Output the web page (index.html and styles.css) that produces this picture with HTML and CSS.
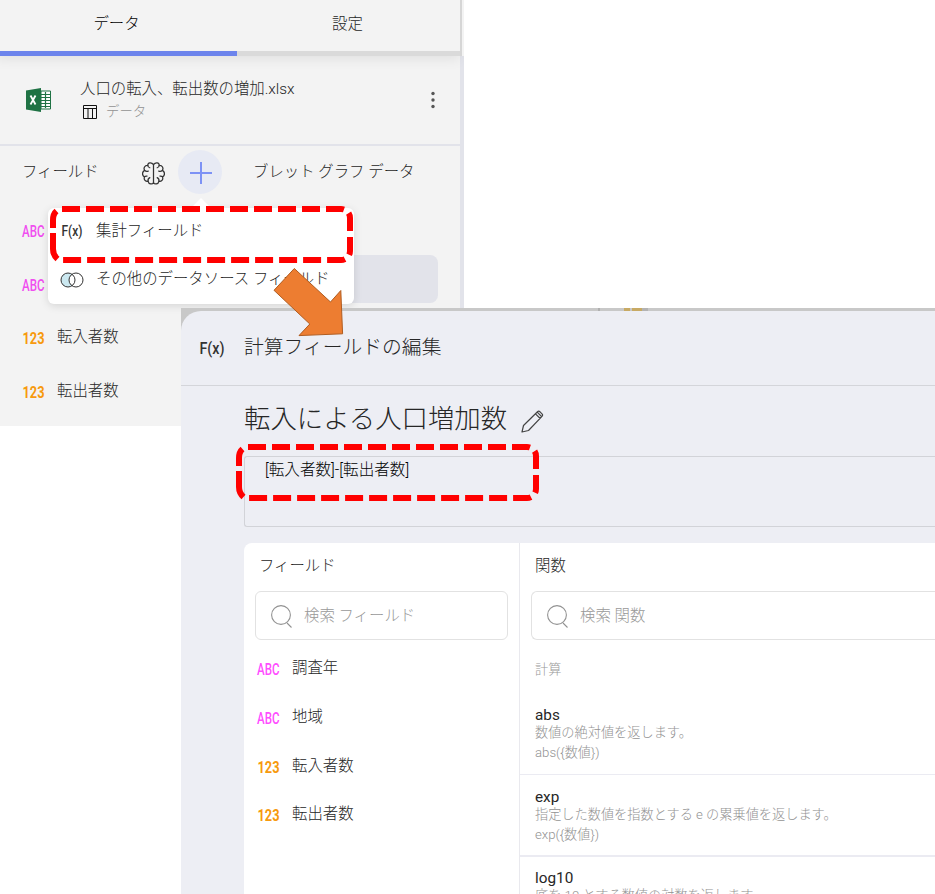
FILE: index.html
```html
<!DOCTYPE html>
<html lang="ja">
<head>
<meta charset="utf-8">
<title>計算フィールドの編集</title>
<link rel="stylesheet" href="styles.css">
</head>
<body>
<svg class="defs" aria-hidden="true">
  <symbol id="search" viewBox="0 0 24 24"><g fill="none" stroke="#929292" stroke-width="1.1"><circle cx="11" cy="10" r="9.4"/><path d="M17 18l4.500 4.500"/></g></symbol>
  <symbol id="frame" viewBox="0 0 304 58">
    <g fill="none" stroke="#f00" stroke-width="6">
      <path stroke-dasharray="18 6" d="M12 4H291a9 9 0 0 1 9 9V46a9 9 0 0 1-9 9H13"/>
      <path d="M3 23V15Q3 9 6.500 6M3 28V44Q3 50 7.500 54"/>
    </g>
  </symbol>
</svg>
<main class="stage">
  <section class="panel">
    <nav class="tabs">
      <div class="tab active">データ</div>
      <div class="tab">設定</div>
    </nav>
    <div class="source">
      <svg class="excel" viewBox="0 0 26 24"><path fill="#1f7244" d="M0 2.500L15 0V24L0 21.500z"/><path fill="#fff" stroke="#1f7244" d="M15 3h9.500v18H15z"/><path stroke="#1f7244" stroke-width="1.200" d="M15 6.500h9M15 9.500h9M15 12.500h9M15 15.500h9M15 18.500h9M19.500 4v16"/><path stroke="#fff" stroke-width="1.800" d="M4.500 7.500l5 9M9.500 7.500l-5 9"/></svg>
      <div class="source-text">
        <div>人口の転入、転出数の増加.xlsx</div>
        <div class="sheet"><svg class="table" viewBox="0 0 14 14"><path fill="none" stroke="#111" d="M.5.5h13v13H.5zM.5 3.500h13M5 3.500v10M9.500 3.500v10"/></svg><span>データ</span></div>
      </div>
      <svg class="dots" viewBox="0 0 4 18"><g fill="#555"><circle cx="2" cy="2.500" r="1.700"/><circle cx="2" cy="9" r="1.700"/><circle cx="2" cy="15.500" r="1.700"/></g></svg>
    </div>
    <div class="field-head">
      <span class="head-label">フィールド</span>
      <svg class="brain" viewBox="0 0 22 22"><g fill="none" stroke="#333" stroke-width="1.200" stroke-linecap="round"><path d="M11 2v18M11 2.500C9-.2 5.500.5 5.500 3.200C2.500 3 1.200 6 2.500 8C-.2 9.500 0 13 2.300 14.200C1.500 17 3.500 19 5.800 18.500C6.500 21.500 10 21.800 11 19.500M11 2.500C13-.2 16.500.5 16.500 3.200C19.500 3 20.800 6 19.500 8C22.200 9.500 22 13 19.700 14.200C20.500 17 18.500 19 16.200 18.500C15.500 21.500 12 21.800 11 19.500"/><path d="M5.500 3.200q0 2 2 2.300M2.500 8q1.500 1.500 3.500.7M5.800 18.500q-.5-2.500 1.700-3.500M2.300 14.200q1.200-1 2.500-.7M16.500 3.200q0 2-2 2.300M19.500 8q-1.500 1.500-3.500.7M16.200 18.500q.5-2.500-1.700-3.500M19.700 14.200q-1.200-1-2.500-.7"/></g></svg>
      <span class="add"><svg viewBox="0 0 22 22"><path fill="none" stroke="#7d92f5" stroke-width="2" d="M11 0v22M0 11h22"/></svg></span>
      <span>ブレット グラフ データ</span>
    </div>
    <div class="left-list">
      <div class="row"><svg class="type" viewBox="0 0 24 16"><text x="0" y="14" textLength="22.5" lengthAdjust="spacingAndGlyphs">ABC</text></svg></div>
      <div class="row"><svg class="type" viewBox="0 0 24 16"><text x="0" y="14" textLength="22.5" lengthAdjust="spacingAndGlyphs">ABC</text></svg><span class="drop"></span></div>
      <div class="row"><svg class="type num" viewBox="0 0 24 16"><text x="0.5" y="14" textLength="22" lengthAdjust="spacingAndGlyphs">123</text></svg><span>転入者数</span></div>
      <div class="row"><svg class="type num" viewBox="0 0 24 16"><text x="0.5" y="14" textLength="22" lengthAdjust="spacingAndGlyphs">123</text></svg><span>転出者数</span></div>
    </div>
    <div class="menu">
      <div class="menu-item"><svg class="fx" viewBox="0 0 22 20"><text x="0.5" y="15" textLength="21" lengthAdjust="spacingAndGlyphs" class="fx-text">F(x)</text></svg><span>集計フィールド</span></div>
      <div class="menu-item"><svg class="join" viewBox="0 0 24 16"><circle cx="8" cy="8" r="7" fill="#cbe8f0"/><circle cx="16" cy="8" r="7" fill="#fff"/><g stroke="#333" fill="none"><circle cx="8" cy="8" r="7"/><circle cx="16" cy="8" r="7"/></g></svg><span>その他のデータソース フィールド</span></div>
    </div>
  </section>

  <section class="dialog-wrap">
    <i class="mark m1"></i><i class="mark m2"></i><i class="mark m3"></i><i class="mark m4"></i>
    <div class="dialog">
      <header class="dialog-head"><svg class="fx-large" viewBox="0 0 26 24"><text x="0.5" y="18" textLength="25" lengthAdjust="spacingAndGlyphs" class="fx-text fx-big">F(x)</text></svg><span>計算フィールドの編集</span></header>
      <div class="body">
        <h1>転入による人口増加数<svg class="pencil" viewBox="0 0 23 23"><g fill="none" stroke="#444" stroke-width="1.200" stroke-linejoin="round"><path d="M1 22l1.500-6.500L16.500 1.800q1.200-1.200 2.500 0l2 2q1.200 1.200 0 2.500L7.500 20.500zM14.500 3.800l4.700 4.700M16.200 2.200l4.700 4.700"/></g></svg></h1>
        <div class="formula">[転入者数]-[転出者数]</div>
        <div class="columns">
          <div class="fields">
            <h2>フィールド</h2>
            <div class="search"><svg><use href="#search"/></svg>検索 フィールド</div>
            <div class="list">
              <div class="item"><svg class="type bright" viewBox="0 0 24 16"><text x="1" y="13.500" textLength="22.5" lengthAdjust="spacingAndGlyphs">ABC</text></svg><span>調査年</span></div>
              <div class="item"><svg class="type bright" viewBox="0 0 24 16"><text x="1" y="13.500" textLength="22.5" lengthAdjust="spacingAndGlyphs">ABC</text></svg><span>地域</span></div>
              <div class="item"><svg class="type num" viewBox="0 0 24 16"><text x="1.500" y="13.500" textLength="22" lengthAdjust="spacingAndGlyphs">123</text></svg><span>転入者数</span></div>
              <div class="item"><svg class="type num" viewBox="0 0 24 16"><text x="1.500" y="13.500" textLength="22" lengthAdjust="spacingAndGlyphs">123</text></svg><span>転出者数</span></div>
            </div>
          </div>
          <div class="functions">
            <h2>関数</h2>
            <div class="search"><svg><use href="#search"/></svg>検索 関数</div>
            <div class="group">計算</div>
            <div class="fn"><b>abs</b><p>数値の絶対値を返します。</p><p>abs({数値})</p></div>
            <div class="fn thick"><b>exp</b><p>指定した数値を指数とする e の累乗値を返します。</p><p>exp({数値})</p></div>
            <div class="fn"><b>log10</b><p>底を 10 とする数値の対数を返します。</p></div>
          </div>
        </div>
      </div>
    </div>
  </section>
  <svg class="frame f1"><use href="#frame"/></svg>
  <svg class="frame f2"><use href="#frame"/></svg>
  <svg class="arrow" viewBox="270 265 76 74"><path fill="#ed7d31" stroke="#b05c20" d="M294.300 268.500L330.500 302L340.800 290.500L342.600 333.800L299 335.600L309.800 324L274 290.300z"/></svg>
</main>
</body>
</html>
```
FILE: styles.css
```css
* { box-sizing: border-box; }
body {
  margin: 0;
  background: #fff;
  color: #262626;
  font: 300 15.4px/22px Roboto, "Noto Sans CJK JP", sans-serif;
}
.defs { position: absolute; width: 0; height: 0; }
svg { display: block; flex: none; }
.stage {
  position: relative;
  display: grid;
  grid-template: 894px / 935px;
  width: 935px;
  height: 894px;
  overflow: hidden;
}
.panel, .dialog-wrap { grid-area: 1 / 1; }
.panel {
  position: relative;
  width: 464px;
  height: 426px;
  overflow: hidden;
  background: linear-gradient(90deg, #f3f3f3 460px, #e2e3ea 460px);
}
.tabs { display: flex; width: 464px; height: 56px; box-shadow: -4px 3px 12px rgba(0, 0, 0, .08); background: linear-gradient(90deg, #f3f3f3 460px, #d6d6d6 460px 462px, #f3f3f3 462px); }
.tab { width: 223px; padding: 13px 2px 0 0; border-bottom: 5px solid #dadada; text-align: center; }
.tab.active { width: 237px; padding: 13px 4px 0 0; border-color: #6c84ec; color: #000; }
.source { display: flex; width: 460px; height: 90px; border-bottom: 2px solid #e2e3ea; padding: 22px 25px 0 26px; }
.excel { width: 26px; height: 24px; margin: 10px 28px 0 0; }
.source-text { flex: 1; }
.sheet { display: flex; gap: 9px; color: #929292; font-size: 13.4px; }
.sheet span { padding-top: 1px; }
.table { width: 14px; height: 14px; margin: 5px 0 0 3px; }
.dots { width: 4px; height: 18px; margin-top: 13px; }
.field-head { display: flex; height: 58px; padding: 15px 0 0 22px; }
.head-label { width: 120px; }
.brain { width: 23px; height: 23px; margin: 1px 13px 0 0; }
.add { display: grid; place-items: center; width: 44px; height: 44px; margin: -11px 31px 0 0; border-radius: 50%; background: #e7eaf4; }
.add svg { width: 22px; height: 22px; margin-left: 2px; margin-top: 2px; }
.left-list { width: 460px; padding-left: 22px; }
.row { display: flex; align-items: center; gap: 11px; height: 53.7px; line-height: 20px; }
.row span { padding-bottom: 2px; }
.type { width: 24px; height: 16px; font: 500 16px Roboto; fill: #f04ef0; overflow: visible; }
.type.bright { fill: #ff4dff; }
.type.num { font-weight: 700; fill: #f79a0e; }
.row .drop { flex: 1; height: 48px; padding: 0; margin: -11px 22px 0 40px; border-radius: 8px; background: #e2e3ea; }
.menu { position: absolute; left: 48px; top: 208px; width: 306px; height: 96px; border-radius: 6px; background: #fff; box-shadow: 0 2px 8px rgba(0, 0, 0, .12); }
.menu::before { content: ""; position: absolute; left: 146px; top: -7px; width: 14px; height: 14px; transform: rotate(45deg); background: #fff; }
.menu-item { position: relative; display: flex; gap: 13px; height: 48px; padding: 12px 0 0 13px; white-space: nowrap; }
.fx { width: 22px; height: 20px; margin-top: 1px; overflow: visible; }
.join { width: 24px; height: 16px; margin: 4px -1px 0 -1px; }
.fx-text { font: 500 14.500px Roboto; fill: #333; }
.fx-big { font-size: 17px; }
.dialog-wrap { position: relative; margin: 308px 0 0 181px; background: linear-gradient(#c8c8c8 30px, #edeef4 30px); padding-top: 3px; }
.mark { position: absolute; top: 0; height: 3px; }
.m1 { left: 417px; width: 2px; background: #b0b0b0; }
.m2 { left: 443px; width: 6px; background: #c8aa64; }
.m3 { left: 451px; width: 10px; background: #c8aa64; }
.m4 { left: 461px; width: 6px; background: #b3b3b3; }
.dialog { height: 583px; border-radius: 20px 0 0; background: #edeef4; overflow: hidden; }
.dialog-head { display: flex; gap: 19px; height: 75px; padding: 23px 0 0 18px; border-bottom: 1px solid #d4d5da; font-size: 19.8px; line-height: 28px; }
.fx-large { width: 26px; height: 24px; margin-top: 2px; overflow: visible; }
.body { padding: 14px 0 0 63px; }
h1 { display: flex; gap: 14px; height: 56px; margin: 0; font-size: 26.4px; font-weight: 300; line-height: 39px; }
.pencil { width: 23px; height: 23px; margin-top: 10px; }
.formula { height: 71px; padding: 2px 20px; border: 1px solid #d2d3d8; border-right: 0; border-radius: 3px 0 0 3px; color: #000; font-size: 15.6px; }
.columns { display: flex; height: 360px; margin-top: 16px; border-radius: 8px 0 0; background: #fff; overflow: hidden; }
.fields { width: 276px; border-right: 1px solid #e9e9ee; padding-left: 11px; }
.functions { flex: 1; padding-left: 11px; }
h2 { margin: 0; height: 48px; padding: 12px 4px 0; font-size: 15.4px; font-weight: 300; line-height: 22px; }
.search { display: flex; gap: 10px; height: 49px; padding: 13px 14px 0; border: 1px solid #e2e2e2; border-radius: 6px; color: #999; }
.search svg { width: 24px; height: 24px; }
.fields .search { width: 253px; }
.functions .search { border-right: 0; border-radius: 6px 0 0 6px; }
.list { padding: 4px 0 0 1px; }
.item { display: flex; align-items: center; gap: 12px; height: 48.7px; padding-bottom: 2px; }
.item .type { margin-top: 4px; }
.item span { padding-top: 2px; }
.group { height: 50px; padding: 19px 4px 0; font-size: 13.2px; color: #999; }
.fn { height: 81px; margin-left: -11px; padding: 12px 15px 0; border-bottom: 1px solid #ebebf2; font-size: 13.2px; line-height: 20px; color: #929292; white-space: nowrap; }
.group + .fn { height: 85px; padding-top: 16px; }
.thick { height: 82px; padding-top: 13px; border-bottom-width: 2px; }
.fn b { display: block; height: 17px; color: #262626; font-size: 15.3px; font-weight: 400; line-height: 18px; }
.fn p { margin: 0; }
.frame { position: absolute; width: 304px; height: 58px; }
.f1 { left: 50px; top: 205px; }
.f2 { left: 236px; top: 443px; }
.arrow { position: absolute; left: 270px; top: 265px; width: 76px; height: 74px; }
```
